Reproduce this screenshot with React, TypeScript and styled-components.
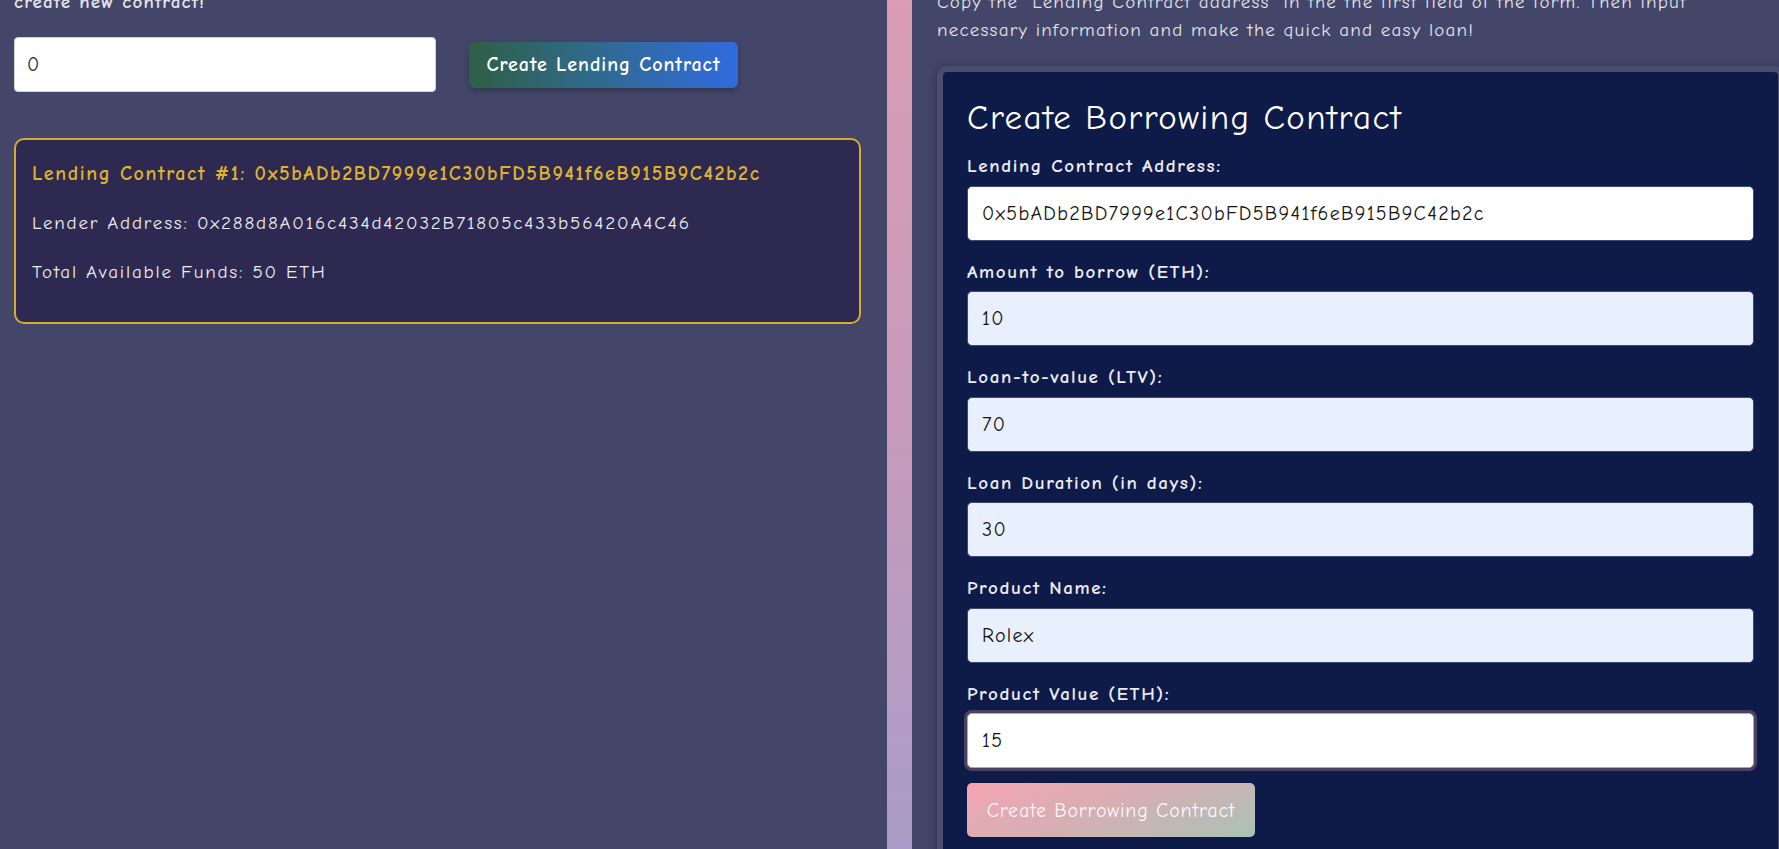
import React from 'react';
import styled, { createGlobalStyle } from 'styled-components';

const GlobalStyle = createGlobalStyle`
  html, body {
    margin: 0;
    padding: 0;
    background: #434669;
    overflow: hidden;
  }
  body {
    font-family: "Comic Sans MS", "Comic Neue", "Open Sans", sans-serif;
    color: #e6e6ee;
  }
  * {
    box-sizing: border-box;
  }
`;

const Page = styled.div`
  display: flex;
  width: max-content;
  min-height: 880px;
  margin-top: -12px;
`;

const LeftColumn = styled.section`
  width: 887px;
  padding: 0 26px 0 14px;
`;

const Divider = styled.div`
  width: 25px;
  flex-shrink: 0;
  background: linear-gradient(180deg, #d99db3 0%, #c69bbb 50%, #a89dc8 100%);
`;

const RightColumn = styled.section`
  width: 880px;
  padding-left: 25px;
`;

const Intro = styled.p<{ $bold?: boolean }>`
  margin: 0;
  font-size: 19px;
  line-height: 28px;
  letter-spacing: 1.2px;
  font-weight: ${(p) => (p.$bold ? 700 : 400)};
  color: #e2e2ea;
  white-space: nowrap;
`;

const CreateRow = styled.div`
  display: flex;
  align-items: center;
  gap: 33px;
  margin-top: 21px;
`;

const AmountInput = styled.input`
  width: 422px;
  height: 55px;
  padding: 0 12px;
  border: 1px solid #cfd2dc;
  border-radius: 4px;
  background: #fff;
  font-family: inherit;
  font-size: 20px;
  color: #222;
  outline: none;
`;

const LendButton = styled.button`
  width: 269px;
  height: 46px;
  padding: 0;
  border: none;
  border-radius: 6px;
  background: linear-gradient(90deg, #2e5f46 0%, #306a8a 45%, #306be0 100%);
  box-shadow: 0 3px 6px rgba(0, 0, 0, 0.25);
  color: #fff;
  font-family: inherit;
  font-size: 20px;
  font-weight: 700;
  letter-spacing: 1px;
  cursor: pointer;
`;

const ContractCard = styled.div`
  margin-top: 46px;
  padding: 22px 16px 38px;
  border: 2px solid #d4ac2e;
  border-radius: 10px;
  background: #2d2950;
  display: flex;
  flex-direction: column;
  gap: 25px;
`;

const CardTitle = styled.h3`
  margin: 0;
  font-size: 20px;
  line-height: 24px;
  letter-spacing: 1.6px;
  font-weight: 700;
  color: #ddb22f;
`;

const CardLine = styled.p`
  margin: 0;
  font-size: 19px;
  line-height: 24px;
  letter-spacing: 1.8px;
  color: #ececf2;
`;

const BorrowForm = styled.form`
  margin-top: 22px;
  width: 847px;
  padding: 25px 24px 40px;
  border: 6px solid #4a4d70;
  border-radius: 10px;
  background: #0e1a48;
  box-shadow: 0 2px 12px rgba(0, 0, 0, 0.35);
`;

const FormTitle = styled.h2`
  margin: 0 0 16px;
  font-size: 35px;
  line-height: 42px;
  letter-spacing: 1.4px;
  font-weight: 400;
  color: #fff;
`;

const Field = styled.div`
  margin-bottom: 20px;

  &:last-of-type {
    margin-bottom: 15px;
  }
`;

const Label = styled.label`
  display: block;
  margin-bottom: 8px;
  font-size: 19px;
  line-height: 22.5px;
  letter-spacing: 1.6px;
  font-weight: 700;
  color: #ebebf2;
`;

const TextInput = styled.input<{ $autofill?: boolean; $focused?: boolean }>`
  display: block;
  width: 100%;
  height: 55px;
  padding: 0 14px;
  border: 1px solid ${(p) => (p.$focused ? '#f39a5a' : '#3d4a7a')};
  border-radius: 5px;
  background: ${(p) => (p.$autofill ? '#e8f0fe' : '#ffffff')};
  box-shadow: ${(p) => (p.$focused ? '0 0 0 3px #4a4260' : 'none')};
  font-family: inherit;
  font-size: 20px;
  letter-spacing: 1.3px;
  color: #111;
  outline: none;
`;

const BorrowButton = styled.button`
  width: 288px;
  height: 54px;
  padding: 0;
  border: none;
  border-radius: 5px;
  background: linear-gradient(160deg, #f4a4b0 0%, #d4b0b4 50%, #a9c2b4 100%);
  color: rgba(255, 255, 255, 0.92);
  font-family: inherit;
  font-size: 20px;
  letter-spacing: 0.8px;
  cursor: pointer;
`;

const fields = [
  { label: 'Lending Contract Address:', value: '0x5bADb2BD7999e1C30bFD5B941f6eB915B9C42b2c' },
  { label: 'Amount to borrow (ETH):', value: '10', autofill: true },
  { label: 'Loan-to-value (LTV):', value: '70', autofill: true },
  { label: 'Loan Duration (in days):', value: '30', autofill: true },
  { label: 'Product Name:', value: 'Rolex', autofill: true },
  { label: 'Product Value (ETH):', value: '15', focused: true },
];

const App: React.FC = () => {
  return (
    <>
      <GlobalStyle />
      <Page>
        <LeftColumn>
          <Intro $bold>create new contract!</Intro>
          <CreateRow>
            <AmountInput defaultValue="0" />
            <LendButton type="button">Create Lending Contract</LendButton>
          </CreateRow>
          <ContractCard>
            <CardTitle>Lending Contract #1: 0x5bADb2BD7999e1C30bFD5B941f6eB915B9C42b2c</CardTitle>
            <CardLine>Lender Address: 0x288d8A016c434d42032B71805c433b56420A4C46</CardLine>
            <CardLine>Total Available Funds: 50 ETH</CardLine>
          </ContractCard>
        </LeftColumn>
        <Divider />
        <RightColumn>
          <Intro>
            Copy the "Lending Contract address" in the the first field of the form. Then input
            <br />
            necessary information and make the quick and easy loan!
          </Intro>
          <BorrowForm onSubmit={(e) => e.preventDefault()}>
            <FormTitle>Create Borrowing Contract</FormTitle>
            {fields.map((f) => (
              <Field key={f.label}>
                <Label>{f.label}</Label>
                <TextInput defaultValue={f.value} $autofill={f.autofill} $focused={f.focused} />
              </Field>
            ))}
            <BorrowButton type="submit">Create Borrowing Contract</BorrowButton>
          </BorrowForm>
        </RightColumn>
      </Page>
    </>
  );
};

export default App;
